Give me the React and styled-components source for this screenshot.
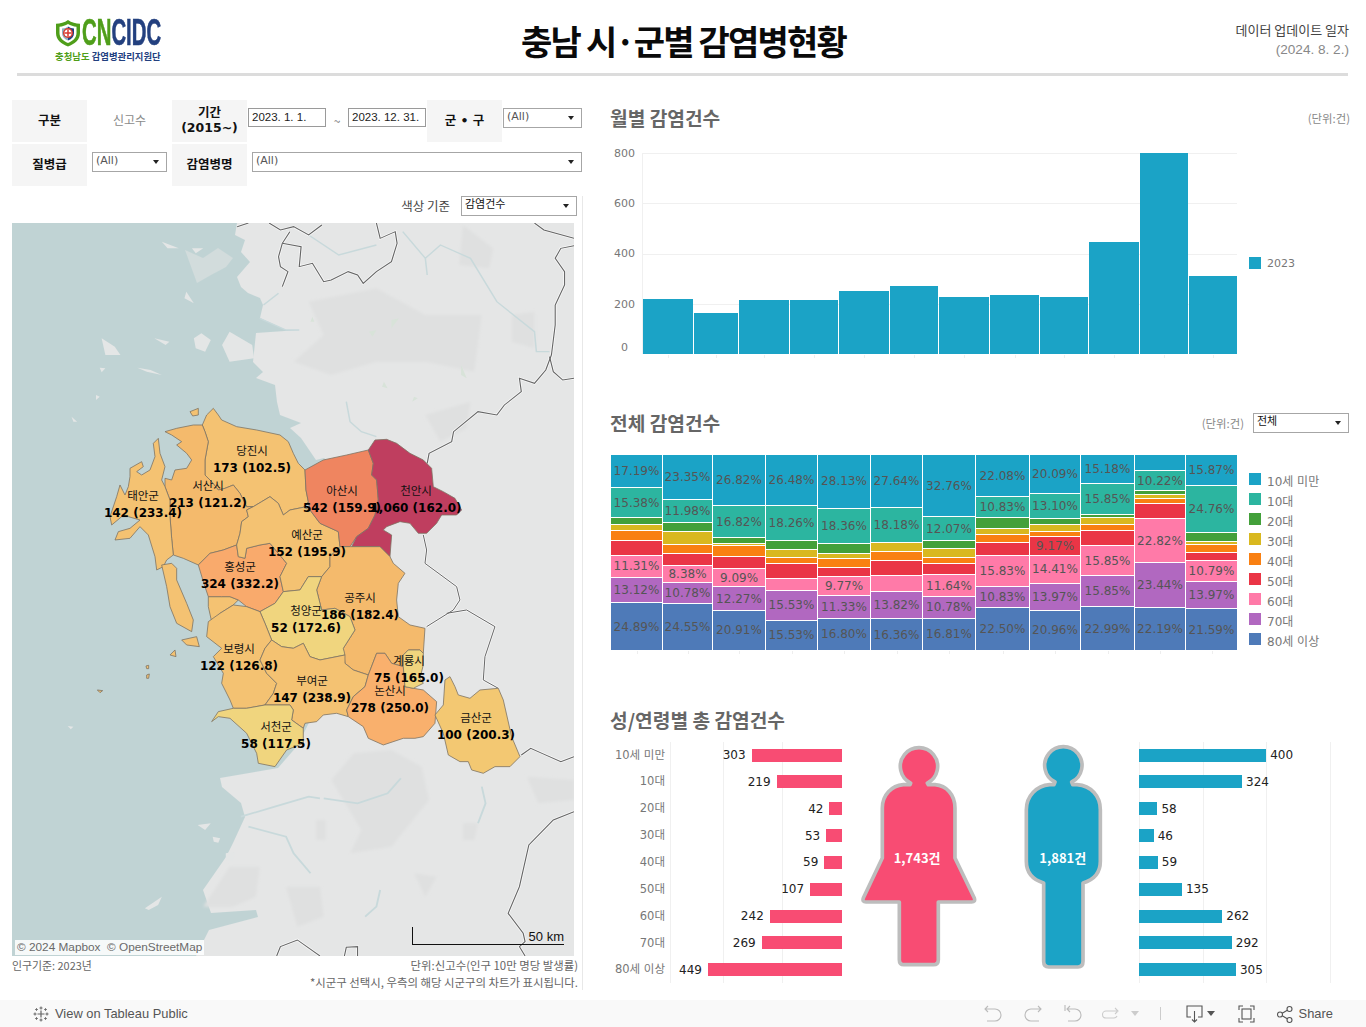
import React from 'react';
import styled, { createGlobalStyle } from 'styled-components';

const GlobalStyle = createGlobalStyle`
  html, body { margin: 0; padding: 0; background: #fff; }
  * { box-sizing: border-box; }
`;

const CJK = `"Noto Sans CJK KR", "Noto Sans", sans-serif`;
const CHART = `"DejaVu Sans", "Noto Sans CJK KR", sans-serif`;

const C = {
  u10: '#1ba3c6', t10: '#2cb5a0', t20: '#43a03a', t30: '#d9b81f', t40: '#f98012',
  t50: '#ea3546', t60: '#ff7aa8', t70: '#b168c0', t80: '#4e7ab8',
};
const SEG_COLORS = [C.u10, C.t10, C.t20, C.t30, C.t40, C.t50, C.t60, C.t70, C.t80];
const LEGEND = ['10세 미만', '10대', '20대', '30대', '40대', '50대', '60대', '70대', '80세 이상'];

// px from the chart: [width, height]
const MONTHS = [[50, 55], [44, 41], [50, 54], [48, 54], [50, 63], [48, 68], [50, 57], [49, 59], [48, 57], [50, 112], [48, 201], [48, 78]];

// strings get a printed label, numbers are drawn without one
const MEKKO = [
  { w: 51, s: ['17.19', '15.38', 3.08, 2.56, 5.13, 7.18, '11.31', '13.12', '24.89'] },
  { w: 49, s: ['23.35', '11.98', 4.1, 6.8, 3.9, 6.3, '8.38', '10.78', '24.55'] },
  { w: 52, s: ['26.82', '16.82', 2.2, 1.0, 4.95, 6.1, '9.09', '12.27', '20.91'] },
  { w: 51, s: ['26.48', '18.26', 4.1, 4.1, 2.6, 7.6, 5.6, '15.53', '15.53'] },
  { w: 52, s: ['28.13', '18.36', 5.1, 2.0, 4.1, 4.6, '9.77', '11.33', '16.80'] },
  { w: 51, s: ['27.64', '18.18', 0, 4.1, 4.1, 7.2, 8.2, '13.82', '16.36'] },
  { w: 52, s: ['32.76', '12.07', 3.6, 4.6, 2.6, 5.1, '11.64', '10.78', '16.81'] },
  { w: 53, s: ['22.08', '10.83', 5.0, 2.7, 3.9, 6.7, '15.83', '10.83', '22.50'] },
  { w: 50, s: ['20.09', '13.10', 2.6, 3.0, 2.6, '9.17', '14.41', '13.97', '20.96'] },
  { w: 53, s: ['15.18', '15.85', 1.0, 3.1, 2.6, 7.7, '15.85', '15.85', '22.99'] },
  { w: 50, s: [7.9, '10.22', 1.5, 1.5, 2.0, 7.7, '22.82', '23.44', '22.19'] },
  { w: 51, s: ['15.87', '24.76', 4.1, 1.0, 3.6, 4.0, '10.79', '13.97', '21.59'] },
];

const FEMALE = [303, 219, 42, 53, 59, 107, 242, 269, 449];
const MALE = [400, 324, 58, 46, 59, 135, 262, 292, 305];

const MAP_LABELS = [
  ['당진시', '173 (102.5)', 252, 450],
  ['서산시', '213 (121.2)', 208, 485],
  ['태안군', '142 (233.4)', 143, 495],
  ['아산시', '542 (159.9)', 342, 490],
  ['천안시', '1,060 (162.0)', 416, 490],
  ['예산군', '152 (195.9)', 307, 534],
  ['홍성군', '324 (332.2)', 240, 566],
  ['공주시', '186 (182.4)', 360, 597],
  ['청양군', '52 (172.6)', 306, 610],
  ['보령시', '122 (126.8)', 239, 648],
  ['계룡시', '75 (165.0)', 409, 660],
  ['부여군', '147 (238.9)', 312, 680],
  ['논산시', '278 (250.0)', 390, 690],
  ['서천군', '58 (117.5)', 276, 726],
  ['금산군', '100 (200.3)', 476, 717],
];

// region outlines, in 3x crop units
const REGIONS = [
  ['#f4c272', '337,75 350,45 370,25 385,45 395,60 440,80 500,90 570,105 595,125 610,160 625,190 645,210 648,270 655,305 640,322 600,330 580,345 565,310 540,290 515,305 490,320 470,320 450,280 430,255 405,265 385,270 365,245 345,225 345,180 355,125 345,95'],
  ['#f4ba6c', '225,95 260,85 310,75 337,75 345,95 355,125 345,180 345,225 365,245 385,270 405,265 430,255 450,280 470,320 490,320 470,330 475,350 455,365 450,400 440,435 400,450 360,460 325,495 280,475 250,465 245,415 240,350 240,300 225,260 225,235 245,240 255,210 290,205 305,180 290,160 260,135 275,125 245,105'],
  ['#f4c272', '120,205 155,185 160,200 140,215 155,225 180,210 195,170 190,130 205,115 210,160 225,200 215,240 225,260 240,300 240,350 245,415 250,465 230,480 220,500 200,510 195,470 175,405 150,380 120,415 75,420 85,395 120,385 150,360 115,350 95,350 65,375 60,350 80,290 90,255 105,285 115,260 120,230'],
  ['#f4c272', '215,495 245,490 260,505 260,540 290,610 310,660 305,695 260,670 240,620 230,560'],
  ['#f4c272', '275,720 320,710 328,740 290,735'],
  ['#f4c272', '240,765 255,750 258,770'],
  ['#f4c272', '168,798 176,796 176,806 170,806'],
  ['#f4c272', '170,825 178,822 176,835 170,835'],
  ['#f4c272', '22,870 38,872 30,878'],
  ['#f4c272', '300,35 325,25 325,45 308,48'],
  ['#f4c272', '355,590 395,590 420,590 445,600 430,615 390,640 365,665 355,620'],
  ['#f9aa6c', '325,495 360,460 400,450 440,435 445,470 465,475 470,445 510,435 540,430 590,490 570,530 580,575 555,610 510,635 470,620 445,600 420,590 395,590 355,590 340,545'],
  ['#f4c272', '450,400 455,365 475,350 470,330 490,320 515,305 540,290 565,310 580,345 600,330 640,322 660,330 690,370 745,395 750,440 720,470 720,500 695,530 655,530 630,570 580,575 570,530 590,490 540,430 510,435 470,445 465,475 445,470 440,435'],
  ['#ef8560', '645,210 700,180 770,165 835,150 850,190 845,225 860,240 865,300 855,345 835,385 800,410 780,440 750,440 745,395 690,370 660,330 655,305 648,270'],
  ['#bf3e5f', '835,150 855,120 890,118 920,130 960,160 1000,180 1025,205 1030,260 1060,275 1095,295 1115,330 1100,345 1055,345 1040,370 1010,400 985,400 960,370 930,365 890,380 880,390 905,405 900,470 870,440 785,440 800,410 835,385 855,345 865,300 860,240 845,225 850,190'],
  ['#f4ba6c', '720,470 750,440 785,440 870,440 900,470 910,490 945,520 925,550 920,600 925,650 960,675 1005,685 1000,760 990,750 955,750 940,765 940,800 905,790 885,760 860,760 835,825 790,810 765,790 760,745 795,690 780,650 735,625 695,630 680,570 695,530 720,500'],
  ['#f0d57e', '510,635 555,610 580,575 630,570 655,530 695,530 680,570 695,630 735,625 780,650 795,690 760,745 765,765 690,780 660,770 640,730 610,745 575,740 545,720 525,670'],
  ['#f4c272', '355,665 390,640 430,615 470,620 510,635 525,670 545,720 525,745 510,780 530,820 560,850 550,880 525,915 470,925 430,925 420,900 395,850 400,820 370,770 395,745 350,710'],
  ['#f4c272', '545,720 575,740 610,745 640,730 660,770 690,780 765,765 765,790 790,810 835,825 825,860 790,890 770,930 775,950 740,940 700,945 680,965 645,970 640,985 605,960 610,930 600,915 525,915 550,880 560,850 530,820 510,780 525,745'],
  ['#f0d57e', '365,965 385,935 430,925 470,925 525,915 600,915 610,930 605,960 640,985 640,1030 590,1050 555,1100 505,1090 500,1060 470,1000 420,955 385,950'],
  ['#f9b06d', '835,825 860,760 885,760 905,790 940,800 945,860 970,865 1000,870 1040,905 1035,970 1000,1010 975,1015 940,1015 880,1035 835,1015 820,980 775,950 770,930 790,890 825,860'],
  ['#f0d57e', '940,765 955,750 990,750 1000,760 1000,795 990,835 1000,850 970,865 945,860 940,800'],
  ['#f3c872', '1035,945 1060,915 1065,840 1080,830 1095,860 1105,885 1140,895 1170,870 1225,865 1240,900 1265,1010 1290,1070 1260,1100 1215,1100 1180,1120 1145,1110 1135,1085 1110,1085 1075,1065 1060,1000'],
];

const BORDERS_TOP = [
  '630,35 660,24',
  '715,24 745,45 780,35 820,60 855,30',
  '770,50 750,85 740,125 745,155 765,170 750,215',
  '750,85 800,95 795,155 830,145 860,200 880,195 925,170 950,180 965,205 1000,170 1040,140 1055,85 1050,50 1010,70 1000,24',
  '1420,24 1445,45 1525,70',
  '1525,92 1490,100 1475,130 1500,170 1500,210 1475,270 1475,330 1465,420 1450,465 1420,505 1380,490 1385,530 1340,570 1320,600 1270,590 1205,650 1200,680 1140,715 1135,745',
  '1460,425 1470,470 1495,495 1525,490',
];
const BORDERS_BOTTOM = [
  '1385,165 1410,145 1440,160 1490,185 1525,170',
  '1525,335 1470,360 1405,435 1380,560 1350,640 1390,700 1395,725 1380,740 1395,768',
  '735,768 745,740 790,720 850,768',
  '915,768 920,742 950,740 950,768',
];
const BORDERS_MID = [
  '1000,405 1010,450 1005,490 1100,560 1110,600 1090,630 1010,680',
  '1070,640 1130,630 1215,680 1185,770 1180,840 1225,865',
];
const RIVERS_TOP = [
  '1070,50 1130,130 1170,90 1250,130 1320,260 1420,350 1425,410 1460,410',
  '820,60 900,120 1000,90',
  '1130,130 1135,180',
  '920,560 930,620 960,650 1000,665',
  '700,270 740,235',
  '690,310 760,345 795,345',
];
const RIVERS_BOTTOM = [
  '640,350 730,320 820,290 850,295',
  '860,295 950,310 1030,280 1065,235',
  '660,380 760,410 780,460 825,520',
  '1010,570 1000,620 970,650',
  '1280,260 1290,310 1270,370',
];
const ISLANDS_TOP = [
  '495,230 515,265 490,250',
  '270,370 280,420 320,420 305,395',
  '515,370 535,355 560,375 545,410 520,400',
  '610,350 670,390 675,430 610,440 590,390',
  '410,370 450,380 440,390',
  '365,458 400,465 430,480 390,470',
  '255,540 265,545 255,555',
  '430,80 475,100 445,100',
  '510,100 540,100 520,115',
  '190,605 205,620 195,620',
  '265,458 280,460 270,472',
];
const ISLANDS_BOTTOM = [
  '385,625 430,590 420,615 395,630',
  '565,410 585,415 580,428 568,425',
  '525,375 560,370 545,390',
  '600,460 625,455 620,485 600,480',
  '180,78 195,80 188,88',
];
const PATCHES_TOP = [
  '820,260 1000,220 1130,300 1280,300 1260,470 1130,440 1000,440 880,480 780,440 860,360',
  '1360,300 1420,290 1420,400 1360,380',
  '1230,30 1310,100 1300,160 1220,150',
  '1130,600 1250,560 1240,640 1170,680',
];
const PATCHES_BOTTOM = [
  '940,160 1040,150 1120,200 1140,300 1040,440 930,460 960,390 880,240',
  '760,560 850,560 860,650 790,680',
  '840,360 865,360 865,420 840,420',
  '1230,370 1270,370 1260,420 1230,420',
  '1100,520 1160,530 1130,590',
  '1400,230 1525,240 1525,300 1430,310',
  '540,620 610,500 690,500 680,590 620,620',
];
const GREENS = ['980,350 1000,345 990,365', '1040,315 1060,310 1040,340', '1100,545 1110,550 1095,560', '830,305 835,320 825,320', '1225,450 1240,490 1225,480', '1020,500 1030,520 1015,515'];

const Page = styled.div`
  width: 1366px;
  height: 1027px;
  display: flex;
  flex-direction: column;
  overflow: hidden;
  font-family: ${CJK};
  color: #333;
  background: #fff;
`;

const Header = styled.header`
  height: 76px;
  margin: 0 18px 0 17px;
  border-bottom: 3px solid #dcdcdc;
  display: grid;
  grid-template-columns: 1fr auto 1fr;
  align-items: center;
`;

const LogoBlock = styled.div`
  display: flex;
  flex-direction: column;
  margin: 7px 0 0 38px;
`;

const LogoTop = styled.div`
  display: flex;
  align-items: center;
  height: 30px;
`;

const LogoWord = styled.span`
  display: inline-block;
  font-family: "Liberation Sans", sans-serif;
  font-weight: 700;
  font-size: 37px;
  line-height: 30px;
  white-space: nowrap;
  transform: scaleX(0.55);
  transform-origin: left center;
  margin-left: 1px;
  color: #23407f;
  -webkit-text-stroke: 0.6px currentColor;
  b { color: #4f9e1a; font-weight: 700; }
`;

const LogoSub = styled.div`
  font-size: 9.4px;
  font-weight: 700;
  line-height: 13px;
  margin-top: 2px;
  white-space: nowrap;
  color: #23407f;
  b { color: #4f9e1a; font-weight: 700; }
`;

const PageTitle = styled.h1`
  margin: 8px 0 0 2px;
  font-size: 34px;
  font-weight: 700;
  color: #0a0a0a;
  line-height: 44px;
  letter-spacing: -1.8px;
  white-space: nowrap;
`;

const UpdateInfo = styled.div`
  text-align: right;
  margin: 6px -1px 0 0;
  font-size: 13px;
  line-height: 19px;
  color: #444;
  span { display: block; margin-top: 1px; color: #888; font-size: 13.6px; font-family: "Liberation Sans", ${CJK}; }
`;

const Body = styled.div`
  display: flex;
  padding: 24px 0 0 12px;
  gap: 27px;
`;

const LeftPanel = styled.section`
  width: 571px;
`;

const FilterRow = styled.div`
  display: flex;
  height: 42px;
  margin-bottom: 2px;
`;

const FilterLabel = styled.div`
  width: 75px;
  margin-left: ${p => p.$ml || 0}px;
  padding-bottom: 2px;
  background: #f5f5f5;
  display: flex;
  align-items: center;
  justify-content: center;
  text-align: center;
  font-family: ${CHART};
  font-size: 12.5px;
  font-weight: 700;
  line-height: 15px;
  color: #111;
`;

const PlainValue = styled.div`
  width: 85px;
  padding-bottom: 3px;
  display: flex;
  align-items: center;
  justify-content: center;
  font-size: 12px;
  color: #8a8a8a;
`;

const DateField = styled.div`
  width: 78px;
  height: 19px;
  margin: 8px 0 0 ${p => p.$ml || 0}px;
  border: 1px solid #9a9a9a;
  font-family: "Liberation Sans", sans-serif;
  font-size: 11.5px;
  line-height: 17px;
  padding-left: 3px;
  color: #222;
  white-space: nowrap;
`;

const Tilde = styled.div`
  width: 22px;
  text-align: center;
  font-size: 12px;
  padding-top: 12px;
  color: #777;
`;

const Dropdown = styled.div`
  position: relative;
  width: ${p => p.$w}px;
  height: 20px;
  margin: ${p => p.$mt ?? 8}px 0 0 ${p => p.$ml || 0}px;
  border: 1px solid #a6a6a6;
  background: #fff;
  font-family: "DejaVu Sans", ${CJK};
  font-size: 11px;
  line-height: 16px;
  padding-left: 3px;
  color: ${p => p.$dark ? '#111' : '#555'};
  &::after {
    content: '';
    position: absolute;
    right: 7px;
    top: 7px;
    border-left: 3px solid transparent;
    border-right: 3px solid transparent;
    border-top: 4px solid #222;
  }
`;

const MapSection = styled.div`
  margin-top: 10px;
  padding-right: 8px;
  border-right: 1px solid #e8e8e8;
  height: 794px;
`;

const ColorByRow = styled.div`
  display: flex;
  justify-content: flex-end;
  align-items: flex-start;
  height: 27px;
  margin-right: -3px;
  font-size: 12.5px;
  color: #444;
  span { margin-right: 11px; line-height: 19px; }
`;

const MapCanvas = styled.div`
  position: relative;
  width: 562px;
  height: 733px;
  background: #c0d3d4;
  overflow: hidden;
  svg { display: block; }
`;

const MapPin = styled.div`
  position: absolute;
  left: ${p => p.$x - 12}px;
  top: ${p => p.$y - 223 - 8}px;
  transform: translateX(-50%);
  text-align: center;
  white-space: nowrap;
  color: #111;
`;

const PinName = styled.div`
  font-size: 11.5px;
  line-height: 16px;
`;

const PinValue = styled.div`
  font-family: "DejaVu Sans", sans-serif;
  font-weight: 700;
  font-size: 12px;
  line-height: 20px;
  color: #000;
`;

const Attribution = styled.div`
  position: absolute;
  left: 3px;
  bottom: 1px;
  padding: 0 2px;
  background: rgba(255,255,255,.85);
  font-family: "Liberation Sans", sans-serif;
  font-size: 11.8px;
  line-height: 15px;
  color: #6a6a6a;
  white-space: nowrap;
`;

const ScaleBar = styled.div`
  position: absolute;
  left: 400px;
  top: 704px;
  width: 152px;
  height: 18px;
  border-left: 1px solid #111;
  border-bottom: 1px solid #111;
  text-align: right;
  font-family: "Liberation Sans", sans-serif;
  font-size: 13px;
  line-height: 20px;
  color: #111;
`;

const NoteRow = styled.div`
  display: flex;
  justify-content: space-between;
  margin-right: -4px;
  font-size: 11.4px;
  line-height: 17px;
  color: #666;
  white-space: nowrap;
`;

const NoteFirst = styled(NoteRow)`
  margin-top: 1px;
`;

const NoteLeft = styled.span`
  font-size: 10.9px;
`;

const NoteEnd = styled(NoteRow)`
  justify-content: flex-end;
`;

const RightPanel = styled.section`
  width: 740px;
`;

const ChartSection = styled.div`
  height: ${p => p.$h}px;
  padding-top: 4px;
`;

const TitleRow = styled.div`
  display: flex;
  align-items: center;
  height: 28px;
  justify-content: space-between;
`;

const ChartTitle = styled.h2`
  margin: 0;
  font-size: 19.2px;
  font-weight: 700;
  line-height: 28px;
  color: #666;
`;

const UnitGroup = styled.div`
  display: flex;
  align-items: flex-start;
  margin: ${p => p.$m || 0};
  font-size: 11.4px;
  color: #888;
  line-height: 18px;
`;

const UnitText = styled.span`
  margin: 1px 9px 0 0;
`;

const MonthlyRow = styled.div`
  display: flex;
  margin-top: 21px;
`;

const YAxis = styled.div`
  width: 32px;
  height: 215px;
  margin-top: -6px;
  display: grid;
  grid-template-rows: 50px 50px 51px 43px 14px;
  font-family: ${CHART};
  font-size: 11px;
  line-height: 14px;
  color: #777;
  padding-left: 4px;
`;

const Plot = styled.div`
  position: relative;
  width: 595px;
  height: 201px;
  border-left: 1px solid #f0f0f0;
`;

const HGrid = styled.div`
  position: absolute;
  inset: 0;
  display: flex;
  flex-direction: column;
  i {
    flex: 1;
    border-top: 1px solid #f0f0f0;
  }
`;

const BarRow = styled.div`
  position: absolute;
  inset: 0;
  display: flex;
  align-items: flex-end;
  gap: 1px;
`;

const MonthBar = styled.div`
  position: relative;
  background: ${C.u10};
  &::after {
    content: '';
    position: absolute;
    left: 50%;
    bottom: -4px;
    width: 1px;
    height: 3px;
    background: #eee;
  }
`;

const SingleLegend = styled.div`
  display: flex;
  align-items: center;
  height: 12px;
  margin: 104px 0 0 12px;
  font-family: ${CHART};
  font-size: 11px;
  color: #777;
`;

const Swatch = styled.i`
  display: block;
  width: 12px;
  height: 12px;
  margin: ${p => p.$up || 0}px 6px 0 0;
  background: ${p => p.$c};
`;

const MekkoRow = styled.div`
  display: flex;
  margin: 18px 0 0 1px;
`;

const Mekko = styled.div`
  display: flex;
  gap: 1px;
  width: 626px;
  height: 195px;
`;

const MekkoColumn = styled.div`
  position: relative;
  display: flex;
  flex-direction: column;
  gap: 1px;
  &::after {
    content: '';
    position: absolute;
    left: 50%;
    bottom: -4px;
    width: 1px;
    height: 3px;
    background: #eee;
  }
`;

const MekkoCell = styled.div`
  flex: ${p => p.$g} 0 0;
  min-height: 0;
  display: flex;
  align-items: center;
  justify-content: center;
  background: ${p => p.$c};
  font-family: "DejaVu Sans", sans-serif;
  font-size: 12px;
  line-height: 12px;
  color: #555;
  white-space: nowrap;
`;

const AgeLegend = styled.div`
  display: flex;
  flex-direction: column;
  margin: 15px 0 0 12px;
`;

const AgeItem = styled.div`
  display: flex;
  align-items: center;
  height: 20px;
  font-family: ${CHART};
  font-size: 12px;
  color: #777;
  white-space: nowrap;
`;

const GenderRow = styled.div`
  display: grid;
  grid-template-columns: 231px 297px 227px;
  height: 241.6px;
  margin: 7.6px 0 0 1px;
`;

const BarChart = styled.div`
  display: flex;
  flex-direction: column;
  position: relative;
`;

const VLine = styled.i`
  position: absolute;
  top: 0;
  bottom: 0;
  left: ${p => p.$x}px;
  width: 1px;
  background: #f0f0f0;
`;

const BarLine = styled.div`
  position: relative;
  flex: 1;
  display: flex;
  align-items: center;
  justify-content: ${p => p.$right ? 'flex-end' : 'flex-start'};
`;

const AgeLabel = styled.span`
  position: absolute;
  left: 0;
  top: 6px;
  width: 54px;
  text-align: right;
  font-family: ${CHART};
  font-size: 11.5px;
  line-height: 15px;
  color: #777;
  white-space: nowrap;
`;

const GenderBar = styled.div`
  position: relative;
  height: 13px;
  background: ${p => p.$c};
`;

const BarValue = styled.span`
  position: relative;
  font-family: "DejaVu Sans", sans-serif;
  font-size: 12px;
  color: #222;
  margin: ${p => p.$right ? '0 6px 0 0' : '0 0 0 4px'};
`;

const Figures = styled.div`
  display: flex;
  gap: 45px;
  padding: 1.7px 0 0 18px;
`;

const Figure = styled.div`
  position: relative;
  height: 227px;
  svg { display: block; }
`;

const FigureCount = styled.div`
  position: absolute;
  left: 0;
  right: ${p => p.$shift || 0}px;
  top: 105px;
  text-align: center;
  font-size: 13px;
  font-weight: 700;
  line-height: 20px;
  color: #fff;
  white-space: nowrap;
`;

const Toolbar = styled.footer`
  margin-top: auto;
  height: 27px;
  background: #f9f9f9;
  display: flex;
  align-items: center;
  justify-content: space-between;
  padding: 0 33px 0 33px;
  font-family: "Liberation Sans", sans-serif;
  font-size: 12.9px;
  color: #555;
`;

const ToolbarLink = styled.div`
  display: flex;
  align-items: center;
  gap: 6px;
`;

const ToolbarIcons = styled.div`
  display: flex;
  align-items: center;
`;

const ToolIcon = styled.svg`
  display: block;
  width: ${p => p.$w}px;
  height: 20px;
  margin-left: ${p => p.$ml || 0}px;
  fill: none;
  stroke: ${p => p.$c || '#bbb'};
  stroke-width: 1.1;
`;

const Caret = styled.i`
  display: block;
  margin-left: ${p => p.$ml || 0}px;
  border-left: 4px solid transparent;
  border-right: 4px solid transparent;
  border-top: 5px solid ${p => p.$c};
`;

const Separator = styled.i`
  display: block;
  width: 1px;
  height: 13px;
  margin-left: ${p => p.$ml || 0}px;
  background: #ccc;
`;

const ShareText = styled.span`
  margin-left: 6px;
`;

const pts = list => list.map(p => <polygon key={p} points={p} />);
const lines = list => list.map(p => <polyline key={p} points={p} />);

const MapDrawing = () => (
  <svg width="562" height="733" viewBox="12 223 562 733">
    <defs>
      <filter id="soft" x="-20%" y="-20%" width="140%" height="140%"><feGaussianBlur stdDeviation="4" /></filter>
      <filter id="halo"><feGaussianBlur stdDeviation="0.8" /></filter>
      <filter id="coast"><feGaussianBlur stdDeviation="0.4" /></filter>
    </defs>
    <polygon
      fill="#e5e6e6"
      filter="url(#coast)"
      points="237,223 235,235 245,240 241,252 250,262 237,277 241,287 248,293 260,298 263,305 260,318 286,330 299,330 256,333 253,362 263,372 256,378 275,385 277,402 280,415 301,423 290,428 301,438 316,460 324,458 340,470 320,700 298,745 278,768 220,778 222,787 241,803 245,817 233,843 226,857 203,890 211,913 256,910 258,917 209,930 196,956 574,956 574,223"
    />
    <polygon fill="#d2dcdc" filter="url(#coast)" points="185,250 197,283 211,275 226,267 233,258 218,248 203,258" />
    <g transform="translate(0 215) scale(.3764 .3333)">
      <g fill="#dfe0e0" filter="url(#soft)">{pts(PATCHES_TOP)}</g>
      <g fill="#e4e6e6">{pts(ISLANDS_TOP)}</g>
      <g fill="#d8e3d9">{pts(GREENS)}</g>
      <g fill="none" stroke="#c8d9db" strokeWidth="4">{lines(RIVERS_TOP)}</g>
      <g fill="none" stroke="#fff" strokeWidth="7" opacity=".8" filter="url(#halo)">{lines(BORDERS_TOP)}</g>
      <g fill="none" stroke="#666" strokeWidth="3">{lines(BORDERS_TOP)}</g>
    </g>
    <g transform="translate(0 700) scale(.3764 .3333)">
      <g fill="#dfe0e0" filter="url(#soft)">{pts(PATCHES_BOTTOM)}</g>
      <g fill="#e4e6e6">{pts(ISLANDS_BOTTOM)}</g>
      <g fill="none" stroke="#c8d9db" strokeWidth="5">{lines(RIVERS_BOTTOM)}</g>
      <g fill="none" stroke="#fff" strokeWidth="7" opacity=".8" filter="url(#halo)">{lines(BORDERS_BOTTOM)}</g>
      <g fill="none" stroke="#666" strokeWidth="3">{lines(BORDERS_BOTTOM)}</g>
    </g>
    <g transform="translate(90 400) scale(.3333)">
      <g fill="none" stroke="#fff" strokeWidth="7" opacity=".8" filter="url(#halo)">{lines(BORDERS_MID)}</g>
      <g fill="none" stroke="#666" strokeWidth="3">{lines(BORDERS_MID)}</g>
      <g stroke="#7e7463" strokeWidth="2.4" strokeLinejoin="round">
        {REGIONS.map(([c, p]) => <polygon key={p} fill={c} points={p} />)}
      </g>
    </g>
  </svg>
);

const LogoShield = () => (
  <svg width="26" height="28" viewBox="0 0 26 28">
    <path d="M13 1C9.500 3.500 5 4.800 1 4.800V14c0 7 5.500 11 12 13.500C19.500 25 25 21 25 14V4.800C21 4.800 16.500 3.500 13 1Z" fill="#4f9e1a" />
    <path d="M13 5C10.500 6.500 7.500 7.500 4.500 7.800V14c0 5 3.800 8 8.500 10 4.700-2 8.500-5 8.500-10V7.800C18.500 7.500 15.500 6.500 13 5Z" fill="#fff" />
    <path d="M7 9.500c3 0 4.500-1 6-2v14C9 20 7 17.500 7 14Z" fill="#8fb0c0" />
    <path d="M13 7.500c2 1 3.500 2 6 2V14c0 3.500-2 6-6 7.500Z" fill="#23407f" />
    <circle cx="13" cy="14" r="4.300" fill="#fff" stroke="#d8392f" strokeWidth="1.500" />
    <path d="M13 10.500v7M9.500 14h7" stroke="#d8392f" strokeWidth="1.500" />
  </svg>
);

const TableauMark = () => (
  <svg width="16" height="16" viewBox="0 0 16 16" fill="none" stroke="#666" strokeWidth="1">
    <path d="M8 4.500v7M4.500 8h7" strokeWidth="1.200" />
    <path d="M8 .5v3M6.500 2h3M8 12.500v3M6.500 14h3M.5 8h3M2 6.500v3M12.500 8h3M14 6.500v3" />
    <path d="M3.500 2v3M2 3.500h3M12.500 2v3M11 3.500h3M3.500 11v3M2 12.500h3M12.500 11v3M11 12.500h3" strokeWidth=".8" />
  </svg>
);

const WomanFigure = () => (
  <svg width="118.3" height="226.7" viewBox="60 40 355 680">
    <path
      d="M212 160 A56 56 0 1 1 262 160 L265 165 H285 C320 168 345 195 345 235 V385 L403 505 Q407 517 395 517 H295 V690 Q295 705 280 705 H192 Q178 705 178 690 V517 H78 Q66 517 70 505 L127 385 V235 C127 195 155 168 190 165 H210 Z"
      fill="#f84c73"
      stroke="#bdbdbd"
      strokeWidth="11"
      strokeLinejoin="round"
    />
  </svg>
);

const ManFigure = () => (
  <svg width="80" height="226.7" viewBox="550 40 240 680">
    <path
      d="M646 157 A56 56 0 1 1 696 157 L699 165 H712 C755 168 782 200 782 240 V395 C782 430 765 450 730 460 V695 Q730 712 715 712 H627 Q612 712 612 695 V460 C578 450 560 430 560 395 V240 C560 200 590 168 630 165 H643 Z"
      fill="#1ba3c6"
      stroke="#bdbdbd"
      strokeWidth="11"
      strokeLinejoin="round"
    />
  </svg>
);

export default function App() {
  return (
    <Page>
      <GlobalStyle />
      <Header>
        <LogoBlock>
          <LogoTop>
            <LogoShield />
            <LogoWord><b>CN</b>CIDC</LogoWord>
          </LogoTop>
          <LogoSub><b>충청남도</b> 감염병관리지원단</LogoSub>
        </LogoBlock>
        <PageTitle>충남 시·군별 감염병현황</PageTitle>
        <UpdateInfo>
          데이터 업데이트 일자
          <span>(2024. 8. 2.)</span>
        </UpdateInfo>
      </Header>

      <Body>
        <LeftPanel>
          <FilterRow>
            <FilterLabel>구분</FilterLabel>
            <PlainValue>신고수</PlainValue>
            <FilterLabel>기간<br />(2015~)</FilterLabel>
            <DateField $ml={1}>2023. 1. 1.</DateField>
            <Tilde>~</Tilde>
            <DateField>2023. 12. 31.</DateField>
            <FilterLabel $ml={1}>군 • 구</FilterLabel>
            <Dropdown $w={79} $ml={1}>(All)</Dropdown>
          </FilterRow>
          <FilterRow>
            <FilterLabel>질병급</FilterLabel>
            <Dropdown $w={75} $ml={5}>(All)</Dropdown>
            <FilterLabel $ml={5}>감염병명</FilterLabel>
            <Dropdown $w={330} $ml={5}>(All)</Dropdown>
          </FilterRow>

          <MapSection>
            <ColorByRow>
              <span>색상 기준</span>
              <Dropdown $w={116} $mt={0} $dark>감염건수</Dropdown>
            </ColorByRow>
            <MapCanvas>
              <MapDrawing />
              {MAP_LABELS.map(([name, value, x, y]) => (
                <MapPin key={name} $x={x} $y={y}>
                  <PinName>{name}</PinName>
                  <PinValue>{value}</PinValue>
                </MapPin>
              ))}
              <Attribution>© 2024 Mapbox&nbsp; © OpenStreetMap</Attribution>
              <ScaleBar>50 km</ScaleBar>
            </MapCanvas>
            <NoteFirst>
              <NoteLeft>인구기준: 2023년</NoteLeft>
              <span>단위:신고수(인구 10만 명당 발생률)</span>
            </NoteFirst>
            <NoteEnd>
              <span>*시군구 선택시, 우측의 해당 시군구의 차트가 표시됩니다.</span>
            </NoteEnd>
          </MapSection>
        </LeftPanel>

        <RightPanel>
          <ChartSection $h={305}>
            <TitleRow>
              <ChartTitle>월별 감염건수</ChartTitle>
              <UnitGroup>(단위:건)</UnitGroup>
            </TitleRow>
            <MonthlyRow>
              <YAxis>
                <span>800</span>
                <span>600</span>
                <span>400</span>
                <span>200</span>
                <span>&nbsp;&nbsp;0</span>
              </YAxis>
              <Plot>
                <HGrid><i /><i /><i /><i /></HGrid>
                <BarRow>
                  {MONTHS.map(([w, h], i) => (
                    <MonthBar key={i} style={{ width: w, height: h }} />
                  ))}
                </BarRow>
              </Plot>
              <SingleLegend><Swatch $c={C.u10} />2023</SingleLegend>
            </MonthlyRow>
          </ChartSection>

          <ChartSection $h={297}>
            <TitleRow>
              <ChartTitle>전체 감염건수</ChartTitle>
              <UnitGroup $m="-1px 1px 0 0">
                <UnitText>(단위:건)</UnitText>
                <Dropdown $w={96} $mt={0} $dark>전체</Dropdown>
              </UnitGroup>
            </TitleRow>
            <MekkoRow>
              <Mekko>
                {MEKKO.map((col, i) => (
                  <MekkoColumn key={i} style={{ width: col.w }}>
                    {col.s.map((v, j) => Number(v) > 0 && (
                      <MekkoCell key={j} $g={Number(v)} $c={SEG_COLORS[j]}>
                        {typeof v === 'string' ? `${v}%` : ''}
                      </MekkoCell>
                    ))}
                  </MekkoColumn>
                ))}
              </Mekko>
              <AgeLegend>
                {LEGEND.map((name, i) => (
                  <AgeItem key={name}><Swatch $c={SEG_COLORS[i]} $up={-2} />{name}</AgeItem>
                ))}
              </AgeLegend>
            </MekkoRow>
          </ChartSection>

          <ChartSection $h={280}>
            <TitleRow>
              <ChartTitle>성/연령별 총 감염건수</ChartTitle>
            </TitleRow>
            <GenderRow>
              <BarChart>
                <VLine $x={59} /><VLine $x={112} /><VLine $x={171} />
                {FEMALE.map((v, i) => (
                  <BarLine key={i} $right>
                    <AgeLabel>{LEGEND[i]}</AgeLabel>
                    <BarValue $right>{v}</BarValue>
                    <GenderBar $c="#f84c73" style={{ width: v * 0.2985 }} />
                  </BarLine>
                ))}
              </BarChart>
              <Figures>
                <Figure>
                  <WomanFigure />
                  <FigureCount $shift={4}>1,743건</FigureCount>
                </Figure>
                <Figure>
                  <ManFigure />
                  <FigureCount $shift={1}>1,881건</FigureCount>
                </Figure>
              </Figures>
              <BarChart>
                <VLine $x={0} /><VLine $x={64} /><VLine $x={127} /><VLine $x={191} />
                {MALE.map((v, i) => (
                  <BarLine key={i}>
                    <GenderBar $c={C.u10} style={{ width: v * 0.318 }} />
                    <BarValue>{v}</BarValue>
                  </BarLine>
                ))}
              </BarChart>
            </GenderRow>
          </ChartSection>
        </RightPanel>
      </Body>

      <Toolbar>
        <ToolbarLink>
          <TableauMark />
          View on Tableau Public
        </ToolbarLink>
        <ToolbarIcons>
          <ToolIcon $w={18} viewBox="0 0 18 20">
            <path d="M4 2 1 5l3 3M1 5h10a5.500 5.500 0 0 1 0 12H3" />
          </ToolIcon>
          <ToolIcon $w={18} $ml={22} viewBox="0 0 18 20">
            <path d="M14 2l3 3-3 3M17 5H7a5.500 5.500 0 0 0 0 12h8" />
          </ToolIcon>
          <ToolIcon $w={18} $ml={22} viewBox="0 0 18 20">
            <path d="M1 1v6M6 2 3 5l3 3M3 5h8a5.500 5.500 0 0 1 0 12H4" />
          </ToolIcon>
          <ToolIcon $w={18} $ml={19} $c="#ccc" viewBox="0 0 18 20">
            <path d="M14 4l3 3-3 3M16 7H5a3.500 3.500 0 0 0 0 7h8a3.500 3.500 0 0 0 3-2" />
          </ToolIcon>
          <Caret $ml={12} $c="#ccc" />
          <Separator $ml={21} />
          <ToolIcon $w={17} $ml={25} $c="#555" viewBox="0 0 17 20">
            <path d="M5 13H1V2h15v11h-4M8.500 7v11M6 15.500 8.500 18l2.500-2.500" />
          </ToolIcon>
          <Caret $ml={4} $c="#555" />
          <ToolIcon $w={17} $ml={23} $c="#555" viewBox="0 0 17 20">
            <path d="M1 6V2h4M12 2h4v4M16 14v4h-4M5 18H1v-4" />
            <rect x="4" y="5" width="9" height="10" />
          </ToolIcon>
          <ToolIcon $w={16} $ml={22} $c="#555" viewBox="0 0 16 20">
            <circle cx="12.500" cy="5" r="2.500" />
            <circle cx="3" cy="10.500" r="2.500" />
            <circle cx="12.500" cy="16" r="2.500" />
            <path d="M5.200 9.200 10.300 6.300M5.200 11.800l5.100 2.900" />
          </ToolIcon>
          <ShareText>Share</ShareText>
        </ToolbarIcons>
      </Toolbar>
    </Page>
  );
}
